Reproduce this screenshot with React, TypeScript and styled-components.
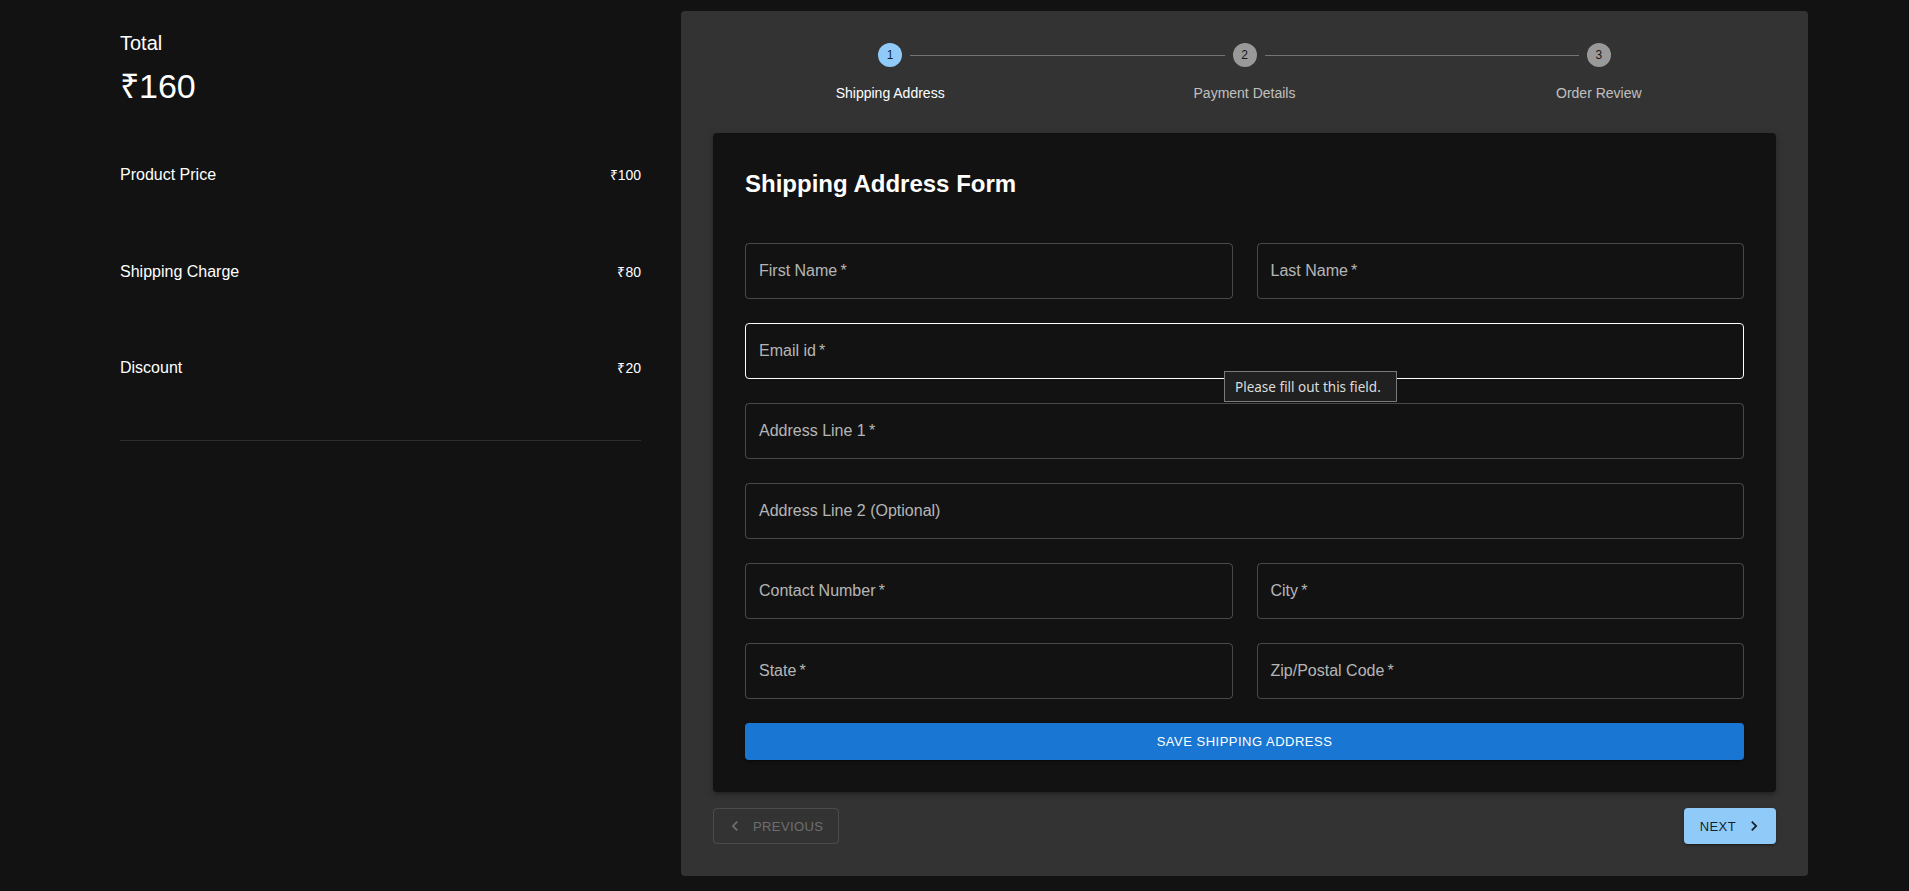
import React from "react";
import styled, { createGlobalStyle } from "styled-components";

const GlobalStyle = createGlobalStyle`
  html, body {
    margin: 0;
    padding: 0;
    background: #121212;
    font-family: "Liberation Sans", Arial, sans-serif;
    color: #ffffff;
  }
  * { box-sizing: border-box; }
`;

const Page = styled.div`
  display: flex;
  align-items: flex-start;
  gap: 40px;
  padding: 11px 0 15px 120px;
  min-height: 891px;
  background: #121212;
`;

const Summary = styled.aside`
  width: 521px;
  flex-shrink: 0;
  padding-top: 16px;
  display: flex;
  flex-direction: column;
`;

const TotalLabel = styled.div`
  font-size: 20px;
  line-height: 32px;
  color: #fff;
`;

const TotalValue = styled.div`
  margin-top: 6px;
  font-size: 34px;
  line-height: 42px;
  color: #fff;
`;

const Rows = styled.div`
  margin-top: 56px;
  display: flex;
  flex-direction: column;
  gap: 72.5px;
`;

const Row = styled.div`
  display: flex;
  justify-content: space-between;
  align-items: baseline;
  line-height: 24px;
`;

const RowLabel = styled.span`
  font-size: 16px;
  color: #fff;
`;

const RowValue = styled.span`
  font-size: 14px;
  color: #fff;
`;

const Divider = styled.hr`
  margin: 60px 0 0;
  border: none;
  border-top: 1px solid rgba(255, 255, 255, 0.12);
`;

const Panel = styled.section`
  width: 1127px;
  flex-shrink: 0;
  background: #333333;
  border-radius: 4px;
  padding: 32px;
  display: flex;
  flex-direction: column;
`;

const Stepper = styled.div`
  display: flex;
  flex-direction: column;
`;

const Track = styled.div`
  display: grid;
  grid-template-columns: 1fr 24px 2fr 24px 2fr 24px 1fr;
  align-items: center;
  height: 24px;
`;

const Circle = styled.div<{ $active?: boolean }>`
  width: 24px;
  height: 24px;
  border-radius: 50%;
  background: ${(p) => (p.$active ? "#90caf9" : "rgba(255,255,255,0.5)")};
  color: rgba(0, 0, 0, 0.87);
  font-size: 12px;
  display: flex;
  align-items: center;
  justify-content: center;
`;

const Connector = styled.div`
  height: 1px;
  margin: 0 8px;
  background: #757575;
`;

const Labels = styled.div`
  margin-top: 16px;
  display: grid;
  grid-template-columns: repeat(3, 1fr);
`;

const StepLabel = styled.div<{ $active?: boolean }>`
  text-align: center;
  font-size: 14px;
  line-height: 20px;
  color: ${(p) => (p.$active ? "#ffffff" : "rgba(255,255,255,0.7)")};
`;

const Card = styled.div`
  margin-top: 30px;
  background: #121212;
  border-radius: 4px;
  padding: 32px;
  box-shadow: 0px 3px 3px -2px rgba(0, 0, 0, 0.2),
    0px 3px 4px 0px rgba(0, 0, 0, 0.14), 0px 1px 8px 0px rgba(0, 0, 0, 0.12);
`;

const Title = styled.h2`
  margin: 3px 0 0;
  font-size: 24px;
  line-height: 32px;
  font-weight: 700;
  color: #fff;
`;

const FormGrid = styled.div`
  margin-top: 43px;
  display: grid;
  grid-template-columns: 1fr 1fr;
  gap: 24px;
`;

const FieldWrap = styled.div<{ $full?: boolean }>`
  position: relative;
  grid-column: ${(p) => (p.$full ? "1 / -1" : "auto")};
`;

const Field = styled.div<{ $hover?: boolean }>`
  height: 56px;
  border: 1px solid
    ${(p) => (p.$hover ? "#ffffff" : "rgba(255,255,255,0.23)")};
  border-radius: 4px;
  display: flex;
  align-items: center;
  padding: 0 13px;
`;

const FieldLabel = styled.span`
  font-size: 16px;
  color: rgba(255, 255, 255, 0.7);
`;

const Bubble = styled.div`
  position: absolute;
  left: 479px;
  top: 48px;
  z-index: 2;
  width: 173px;
  height: 31px;
  background: #202020;
  border: 1px solid #7a7a7a;
  color: #dcdcdc;
  font-family: "Noto Sans", "Open Sans", sans-serif;
  font-size: 13.5px;
  display: flex;
  align-items: center;
  padding: 0 10px;
  white-space: nowrap;
`;

const SaveButton = styled.button`
  grid-column: 1 / -1;
  height: 37px;
  border: none;
  border-radius: 4px;
  background: #1976d2;
  color: #fff;
  font-family: "Liberation Sans", Arial, sans-serif;
  font-size: 13px;
  letter-spacing: 0.5px;
  text-transform: uppercase;
  box-shadow: 0px 3px 1px -2px rgba(0, 0, 0, 0.2),
    0px 2px 2px 0px rgba(0, 0, 0, 0.14), 0px 1px 5px 0px rgba(0, 0, 0, 0.12);
  cursor: pointer;
`;

const Nav = styled.div`
  margin-top: 16px;
  display: flex;
  justify-content: space-between;
  align-items: center;
`;

const NavButton = styled.button<{ $variant: "outlined" | "contained" }>`
  height: 36px;
  display: inline-flex;
  align-items: center;
  border-radius: 4px;
  font-family: "Liberation Sans", Arial, sans-serif;
  font-size: 13px;
  letter-spacing: 0.4px;
  text-transform: uppercase;
  padding: ${(p) => (p.$variant === "outlined" ? "0 15px" : "0 16px")};
  border: ${(p) =>
    p.$variant === "outlined" ? "1px solid rgba(255,255,255,0.12)" : "none"};
  background: ${(p) => (p.$variant === "outlined" ? "transparent" : "#90caf9")};
  color: ${(p) =>
    p.$variant === "outlined" ? "rgba(255,255,255,0.3)" : "rgba(0,0,0,0.87)"};
  box-shadow: ${(p) =>
    p.$variant === "outlined"
      ? "none"
      : "0px 3px 1px -2px rgba(0,0,0,0.2), 0px 2px 2px 0px rgba(0,0,0,0.14), 0px 1px 5px 0px rgba(0,0,0,0.12)"};
`;

const IconSlot = styled.span<{ $side: "start" | "end" }>`
  display: inline-flex;
  width: 20px;
  height: 20px;
  margin: ${(p) => (p.$side === "start" ? "0 8px 0 -4px" : "0 -4px 0 8px")};
  svg { width: 20px; height: 20px; fill: currentColor; }
`;

const ChevronLeft = () => (
  <svg viewBox="0 0 24 24" aria-hidden="true">
    <path d="M15.41 16.59 10.83 12l4.58-4.59L14 6l-6 6 6 6z" />
  </svg>
);

const ChevronRight = () => (
  <svg viewBox="0 0 24 24" aria-hidden="true">
    <path d="M8.59 16.59 13.17 12 8.59 7.41 10 6l6 6-6 6z" />
  </svg>
);

const summaryRows = [
  { label: "Product Price", value: "₹100" },
  { label: "Shipping Charge", value: "₹80" },
  { label: "Discount", value: "₹20" },
];

const steps = ["Shipping Address", "Payment Details", "Order Review"];

type F = { label: string; full?: boolean; hover?: boolean; bubble?: boolean };
const fields: F[] = [
  { label: "First Name *" },
  { label: "Last Name *" },
  { label: "Email id *", full: true, hover: true, bubble: true },
  { label: "Address Line 1 *", full: true },
  { label: "Address Line 2 (Optional)", full: true },
  { label: "Contact Number *" },
  { label: "City *" },
  { label: "State *" },
  { label: "Zip/Postal Code *" },
];

export default function App() {
  return (
    <>
      <GlobalStyle />
      <Page>
        <Summary>
          <TotalLabel>Total</TotalLabel>
          <TotalValue>₹160</TotalValue>
          <Rows>
            {summaryRows.map((r) => (
              <Row key={r.label}>
                <RowLabel>{r.label}</RowLabel>
                <RowValue>{r.value}</RowValue>
              </Row>
            ))}
          </Rows>
          <Divider />
        </Summary>

        <Panel>
          <Stepper>
            <Track>
              <span />
              <Circle $active>1</Circle>
              <Connector />
              <Circle>2</Circle>
              <Connector />
              <Circle>3</Circle>
              <span />
            </Track>
            <Labels>
              {steps.map((s, i) => (
                <StepLabel key={s} $active={i === 0}>
                  {s}
                </StepLabel>
              ))}
            </Labels>
          </Stepper>

          <Card>
            <Title>Shipping Address Form</Title>
            <FormGrid>
              {fields.map((f) => (
                <FieldWrap key={f.label} $full={f.full}>
                  <Field $hover={f.hover}>
                    <FieldLabel>{f.label.replace(" *", "\u2009*")}</FieldLabel>
                  </Field>
                  {f.bubble && <Bubble>Please fill out this field.</Bubble>}
                </FieldWrap>
              ))}
              <SaveButton>Save Shipping Address</SaveButton>
            </FormGrid>
          </Card>

          <Nav>
            <NavButton $variant="outlined" disabled>
              <IconSlot $side="start">
                <ChevronLeft />
              </IconSlot>
              Previous
            </NavButton>
            <NavButton $variant="contained">
              Next
              <IconSlot $side="end">
                <ChevronRight />
              </IconSlot>
            </NavButton>
          </Nav>
        </Panel>
      </Page>
    </>
  );
}
